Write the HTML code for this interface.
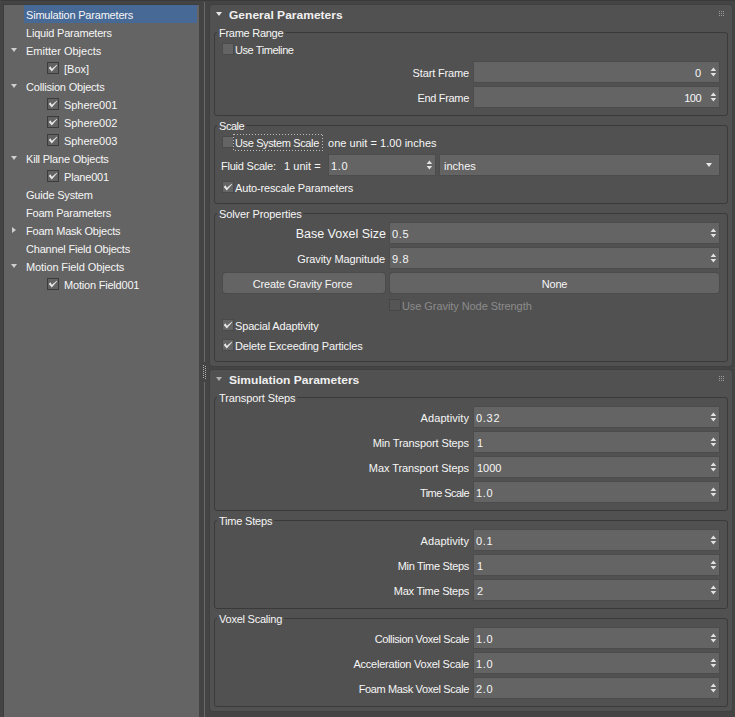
<!DOCTYPE html>
<html><head><meta charset="utf-8"><title>Fluid Simulation Parameters</title>
<style>
html,body{margin:0;padding:0}
body{width:735px;height:717px;overflow:hidden;background:#444444;position:relative;font-family:"Liberation Sans",sans-serif;font-size:11px;color:#f6f6f6}
div,span{position:absolute;box-sizing:border-box;white-space:nowrap}
.tree{left:3px;top:4px;width:196px;height:714px;background:#646464;border:1px solid #3d3d3d;border-right:none}
.row{left:0;height:18px;line-height:18px;width:195px}
.row .t{top:1px;letter-spacing:-0.2px}
.sel{left:20px;top:0;width:173px;height:18px;background:#476996}
.tri-d{width:0;height:0;border-left:3px solid transparent;border-right:3px solid transparent;border-top:4px solid #cfcfcf}
.tri-r{width:0;height:0;border-top:3px solid transparent;border-bottom:3px solid transparent;border-left:4px solid #cfcfcf}
.tcb{width:12px;height:12px;background:#626262;border:1px solid #3b3b3b}
.panel{left:210px;width:522px;background:#515151;border-radius:3px;box-shadow:0 0 0 1px #404040}
.hd{font-weight:bold;font-size:11px;left:19px;top:3px;line-height:14px;color:#f0f0f0;transform:scaleX(1.093);transform-origin:0 0}
.grp{left:4px;width:514px;border:1px solid #3a3a3a;border-radius:3px}
.gl{left:2px;top:-7px;height:14px;line-height:14px;padding:0 1.5px 0 2px;background:#515151;letter-spacing:-0.1px}
.lb{height:20px;line-height:20px;letter-spacing:-0.15px;margin-top:1px}
.rl{text-align:right;right:258px}
.fld{height:20px;background:#646464;line-height:20px;box-shadow:0 0 0 1px #4c4c4c}
.fld .v{left:3px;top:1px}
.fld .vr{right:18px;top:1px}
.sp{right:2px;top:5px}
.sp i,.sp b{position:absolute;left:0;width:0;height:0;border-left:2.5px solid transparent;border-right:2.5px solid transparent}
.sp i{top:0;border-bottom:3px solid #e0e0e0}
.sp b{top:5px;border-top:3px solid #e0e0e0}
.cb{width:12px;height:12px;background:#646464;border:1px solid #4a4a4a}
.cbd{width:12px;height:12px;background:#555555;border:1px solid #474747}
.btn{height:20px;line-height:22px;letter-spacing:-0.2px;background:#646464;border-radius:3px;text-align:center;box-shadow:0 0 0 1px #4b4b4b}
svg{position:absolute;overflow:visible}
</style></head><body>

<div style="left:1px;top:0;width:734px;height:1px;background:#3a3a3a"></div>
<div class="tree">
<div class="row" style="top:0px">
<div class="sel"></div>
<span class="t" style="left:22px">Simulation Parameters</span>
</div>
<div class="row" style="top:18px">
<span class="t" style="left:22px">Liquid Parameters</span>
</div>
<div class="row" style="top:36px">
<div class="tri-d" style="left:7px;top:7px"></div>
<span class="t" style="left:22px;letter-spacing:0">Emitter Objects</span>
</div>
<div class="row" style="top:54px">
<div class="tcb" style="left:43px;top:3px"><svg width="10" height="10" viewBox="0 0 10 10" style="left:0;top:0"><path d="M0.7 4.9 L2.4 3.3 L3.9 5.7 L8.8 1.8 L9.2 2.2 L3.8 8.5 Z" fill="#e6e6e6"/></svg></div>
<span class="t" style="left:60px;letter-spacing:0">[Box]</span>
</div>
<div class="row" style="top:72px">
<div class="tri-d" style="left:7px;top:7px"></div>
<span class="t" style="left:22px">Collision Objects</span>
</div>
<div class="row" style="top:90px">
<div class="tcb" style="left:43px;top:3px"><svg width="10" height="10" viewBox="0 0 10 10" style="left:0;top:0"><path d="M0.7 4.9 L2.4 3.3 L3.9 5.7 L8.8 1.8 L9.2 2.2 L3.8 8.5 Z" fill="#e6e6e6"/></svg></div>
<span class="t" style="left:60px;letter-spacing:-0.06px">Sphere001</span>
</div>
<div class="row" style="top:108px">
<div class="tcb" style="left:43px;top:3px"><svg width="10" height="10" viewBox="0 0 10 10" style="left:0;top:0"><path d="M0.7 4.9 L2.4 3.3 L3.9 5.7 L8.8 1.8 L9.2 2.2 L3.8 8.5 Z" fill="#e6e6e6"/></svg></div>
<span class="t" style="left:60px;letter-spacing:-0.06px">Sphere002</span>
</div>
<div class="row" style="top:126px">
<div class="tcb" style="left:43px;top:3px"><svg width="10" height="10" viewBox="0 0 10 10" style="left:0;top:0"><path d="M0.7 4.9 L2.4 3.3 L3.9 5.7 L8.8 1.8 L9.2 2.2 L3.8 8.5 Z" fill="#e6e6e6"/></svg></div>
<span class="t" style="left:60px;letter-spacing:-0.06px">Sphere003</span>
</div>
<div class="row" style="top:144px">
<div class="tri-d" style="left:7px;top:7px"></div>
<span class="t" style="left:22px">Kill Plane Objects</span>
</div>
<div class="row" style="top:162px">
<div class="tcb" style="left:43px;top:3px"><svg width="10" height="10" viewBox="0 0 10 10" style="left:0;top:0"><path d="M0.7 4.9 L2.4 3.3 L3.9 5.7 L8.8 1.8 L9.2 2.2 L3.8 8.5 Z" fill="#e6e6e6"/></svg></div>
<span class="t" style="left:60px">Plane001</span>
</div>
<div class="row" style="top:180px">
<span class="t" style="left:22px">Guide System</span>
</div>
<div class="row" style="top:198px">
<span class="t" style="left:22px">Foam Parameters</span>
</div>
<div class="row" style="top:216px">
<div class="tri-r" style="left:8px;top:6px"></div>
<span class="t" style="left:22px">Foam Mask Objects</span>
</div>
<div class="row" style="top:234px">
<span class="t" style="left:22px">Channel Field Objects</span>
</div>
<div class="row" style="top:252px">
<div class="tri-d" style="left:7px;top:7px"></div>
<span class="t" style="left:22px;letter-spacing:-0.1px">Motion Field Objects</span>
</div>
<div class="row" style="top:270px">
<div class="tcb" style="left:43px;top:3px"><svg width="10" height="10" viewBox="0 0 10 10" style="left:0;top:0"><path d="M0.7 4.9 L2.4 3.3 L3.9 5.7 L8.8 1.8 L9.2 2.2 L3.8 8.5 Z" fill="#e6e6e6"/></svg></div>
<span class="t" style="left:60px">Motion Field001</span>
</div>
</div>
<div style="left:204px;top:2px;width:1px;height:360px;background:#686868"></div>
<div style="left:204px;top:382px;width:1px;height:335px;background:#686868"></div>
<div style="left:203px;top:365px;width:1px;height:1px;background:#b0b0b0"></div>
<div style="left:205px;top:366px;width:1px;height:1px;background:#b0b0b0"></div>
<div style="left:203px;top:367px;width:1px;height:1px;background:#b0b0b0"></div>
<div style="left:205px;top:368px;width:1px;height:1px;background:#b0b0b0"></div>
<div style="left:203px;top:369px;width:1px;height:1px;background:#b0b0b0"></div>
<div style="left:205px;top:370px;width:1px;height:1px;background:#b0b0b0"></div>
<div style="left:203px;top:371px;width:1px;height:1px;background:#b0b0b0"></div>
<div style="left:205px;top:372px;width:1px;height:1px;background:#b0b0b0"></div>
<div style="left:203px;top:373px;width:1px;height:1px;background:#b0b0b0"></div>
<div style="left:205px;top:374px;width:1px;height:1px;background:#b0b0b0"></div>
<div style="left:203px;top:375px;width:1px;height:1px;background:#b0b0b0"></div>
<div style="left:205px;top:376px;width:1px;height:1px;background:#b0b0b0"></div>
<div style="left:203px;top:377px;width:1px;height:1px;background:#b0b0b0"></div>
<div style="left:205px;top:378px;width:1px;height:1px;background:#b0b0b0"></div>
<div class="panel" style="top:5px;height:361px">
<div class="tri-d" style="left:6px;top:7px;border-top-color:#e8e8e8"></div>
<span class="hd">General Parameters</span>
<div style="left:509px;top:6px;width:1px;height:1px;background:#9a9a9a"></div><div style="left:511px;top:6px;width:1px;height:1px;background:#9a9a9a"></div><div style="left:513px;top:6px;width:1px;height:1px;background:#9a9a9a"></div><div style="left:509px;top:8px;width:1px;height:1px;background:#9a9a9a"></div><div style="left:511px;top:8px;width:1px;height:1px;background:#9a9a9a"></div><div style="left:513px;top:8px;width:1px;height:1px;background:#9a9a9a"></div><div style="left:509px;top:10px;width:1px;height:1px;background:#9a9a9a"></div><div style="left:511px;top:10px;width:1px;height:1px;background:#9a9a9a"></div><div style="left:513px;top:10px;width:1px;height:1px;background:#9a9a9a"></div>
<div class="grp" style="top:27px;height:84px"><span class="gl" style="letter-spacing:-0.27px">Frame Range</span>
<div class="cb" style="left:7px;top:10px"></div><span class="lb" style="left:20px;top:6px"><span style="position:static;letter-spacing:-0.42px">Use Timeline</span></span>
<span class="lb rl" style="top:29px">Start Frame</span>
<div class="fld" style="left:259px;top:29px;width:245px"><span class="vr">0</span><svg class="sp" width="7" height="10" viewBox="0 0 7 10"><path d="M0.6 4.1 L3.4 0.6 L6.2 4.1 Z M0.6 6 L3.4 9.4 L6.2 6 Z" fill="#e2e2e2"/></svg></div>
<span class="lb rl" style="top:54px;letter-spacing:-0.31px">End Frame</span>
<div class="fld" style="left:259px;top:54px;width:245px"><span class="vr"><span style="position:static;letter-spacing:-0.5px">100</span></span><svg class="sp" width="7" height="10" viewBox="0 0 7 10"><path d="M0.6 4.1 L3.4 0.6 L6.2 4.1 Z M0.6 6 L3.4 9.4 L6.2 6 Z" fill="#e2e2e2"/></svg></div>
</div>
<div class="grp" style="top:120px;height:79px"><span class="gl" style="letter-spacing:-0.45px">Scale</span>
<div class="cb" style="left:7px;top:10px"></div><span class="lb" style="left:20px;top:6px"><span style="position:static;letter-spacing:-0.37px">Use System Scale</span></span>
<div style="left:18px;top:8px;width:90px;height:17px;background:linear-gradient(90deg,#bdbdbd 1px,transparent 1px) 1px 0/3px 1px repeat-x,linear-gradient(90deg,#bdbdbd 1px,transparent 1px) 2px 16px/3px 1px repeat-x,linear-gradient(180deg,#bdbdbd 1px,transparent 1px) 0 0/1px 3px repeat-y,linear-gradient(180deg,#bdbdbd 1px,transparent 1px) 89px 1px/1px 3px repeat-y"></div>
<span class="lb" style="left:113px;top:6px;letter-spacing:0.03px">one unit = 1.00 inches</span>
<span class="lb" style="left:6px;top:29px;letter-spacing:-0.22px">Fluid Scale:</span>
<span class="lb" style="left:69px;top:29px;letter-spacing:0.05px">1 unit =</span>
<div class="fld" style="left:114px;top:29px;width:106px"><span class="v"><span style="position:static;letter-spacing:0.7px;margin-left:-1px">1.0</span></span><svg class="sp" width="7" height="10" viewBox="0 0 7 10"><path d="M0.6 4.1 L3.4 0.6 L6.2 4.1 Z M0.6 6 L3.4 9.4 L6.2 6 Z" fill="#e2e2e2"/></svg></div>
<div class="fld" style="left:225px;top:29px;width:279px"><span class="v" style="left:4px">inches</span><div class="tri-d" style="right:7px;top:8px;border-top-color:#e8e8e8"></div></div>
<div class="cb" style="left:7px;top:55px"><svg width="10" height="10" viewBox="0 0 10 10" style="left:0;top:0"><path d="M0.7 4.9 L2.4 3.3 L3.9 5.7 L8.8 1.8 L9.2 2.2 L3.8 8.5 Z" fill="#e6e6e6"/></svg></div><span class="lb" style="left:20px;top:51px">Auto-rescale Parameters</span>
</div>
<div class="grp" style="top:208px;height:149px"><span class="gl">Solver Properties</span>
<span class="lb" style="right:341px;top:9px;font-size:12.5px;letter-spacing:0">Base Voxel Size</span>
<div class="fld" style="left:175px;top:9px;width:329px"><span class="v"><span style="position:static;letter-spacing:0.7px;margin-left:-1px">0.5</span></span><svg class="sp" width="7" height="10" viewBox="0 0 7 10"><path d="M0.6 4.1 L3.4 0.6 L6.2 4.1 Z M0.6 6 L3.4 9.4 L6.2 6 Z" fill="#e2e2e2"/></svg></div>
<span class="lb" style="right:342px;top:34px;letter-spacing:-0.09px">Gravity Magnitude</span>
<div class="fld" style="left:175px;top:34px;width:329px"><span class="v"><span style="position:static;letter-spacing:0.7px;margin-left:-1px">9.8</span></span><svg class="sp" width="7" height="10" viewBox="0 0 7 10"><path d="M0.6 4.1 L3.4 0.6 L6.2 4.1 Z M0.6 6 L3.4 9.4 L6.2 6 Z" fill="#e2e2e2"/></svg></div>
<div class="btn" style="left:8px;top:59px;width:162px;padding-right:3px;letter-spacing:-0.12px">Create Gravity Force</div>
<div class="btn" style="left:175px;top:59px;width:329px">None</div>
<div class="cbd" style="left:174px;top:85px"></div><span class="lb" style="color:#8c8c8c;left:187px;top:81px"><span style="position:static;letter-spacing:-0.07px">Use Gravity Node Strength</span></span>
<div class="cb" style="left:7px;top:105px"><svg width="10" height="10" viewBox="0 0 10 10" style="left:0;top:0"><path d="M0.7 4.9 L2.4 3.3 L3.9 5.7 L8.8 1.8 L9.2 2.2 L3.8 8.5 Z" fill="#e6e6e6"/></svg></div><span class="lb" style="left:20px;top:101px">Spacial Adaptivity</span>
<div class="cb" style="left:7px;top:125px"><svg width="10" height="10" viewBox="0 0 10 10" style="left:0;top:0"><path d="M0.7 4.9 L2.4 3.3 L3.9 5.7 L8.8 1.8 L9.2 2.2 L3.8 8.5 Z" fill="#e6e6e6"/></svg></div><span class="lb" style="left:20px;top:121px">Delete Exceeding Particles</span>
</div>
</div>
<div class="panel" style="top:370px;height:341px">
<div class="tri-d" style="left:6px;top:7px;border-top-color:#b0b0b0"></div>
<span class="hd">Simulation Parameters</span>
<div style="left:509px;top:6px;width:1px;height:1px;background:#9a9a9a"></div><div style="left:511px;top:6px;width:1px;height:1px;background:#9a9a9a"></div><div style="left:513px;top:6px;width:1px;height:1px;background:#9a9a9a"></div><div style="left:509px;top:8px;width:1px;height:1px;background:#9a9a9a"></div><div style="left:511px;top:8px;width:1px;height:1px;background:#9a9a9a"></div><div style="left:513px;top:8px;width:1px;height:1px;background:#9a9a9a"></div><div style="left:509px;top:10px;width:1px;height:1px;background:#9a9a9a"></div><div style="left:511px;top:10px;width:1px;height:1px;background:#9a9a9a"></div><div style="left:513px;top:10px;width:1px;height:1px;background:#9a9a9a"></div>
<div class="grp" style="top:27px;height:114px"><span class="gl" style="letter-spacing:-0.1px">Transport Steps</span><span class="lb rl" style="top:9px;letter-spacing:0.07px">Adaptivity</span><div class="fld" style="left:259px;top:9px;width:245px"><span class="v"><span style="position:static;letter-spacing:0.7px;margin-left:-1px">0.32</span></span><svg class="sp" width="7" height="10" viewBox="0 0 7 10"><path d="M0.6 4.1 L3.4 0.6 L6.2 4.1 Z M0.6 6 L3.4 9.4 L6.2 6 Z" fill="#e2e2e2"/></svg></div><span class="lb rl" style="top:34px;letter-spacing:-0.11px">Min Transport Steps</span><div class="fld" style="left:259px;top:34px;width:245px"><span class="v">1</span><svg class="sp" width="7" height="10" viewBox="0 0 7 10"><path d="M0.6 4.1 L3.4 0.6 L6.2 4.1 Z M0.6 6 L3.4 9.4 L6.2 6 Z" fill="#e2e2e2"/></svg></div><span class="lb rl" style="top:59px;letter-spacing:-0.07px">Max Transport Steps</span><div class="fld" style="left:259px;top:59px;width:245px"><span class="v">1000</span><svg class="sp" width="7" height="10" viewBox="0 0 7 10"><path d="M0.6 4.1 L3.4 0.6 L6.2 4.1 Z M0.6 6 L3.4 9.4 L6.2 6 Z" fill="#e2e2e2"/></svg></div><span class="lb rl" style="top:84px;letter-spacing:-0.55px">Time Scale</span><div class="fld" style="left:259px;top:84px;width:245px"><span class="v"><span style="position:static;letter-spacing:0.7px;margin-left:-1px">1.0</span></span><svg class="sp" width="7" height="10" viewBox="0 0 7 10"><path d="M0.6 4.1 L3.4 0.6 L6.2 4.1 Z M0.6 6 L3.4 9.4 L6.2 6 Z" fill="#e2e2e2"/></svg></div></div>
<div class="grp" style="top:150px;height:89px"><span class="gl" style="letter-spacing:-0.2px">Time Steps</span><span class="lb rl" style="top:9px;letter-spacing:0.07px">Adaptivity</span><div class="fld" style="left:259px;top:9px;width:245px"><span class="v"><span style="position:static;letter-spacing:0.7px;margin-left:-1px">0.1</span></span><svg class="sp" width="7" height="10" viewBox="0 0 7 10"><path d="M0.6 4.1 L3.4 0.6 L6.2 4.1 Z M0.6 6 L3.4 9.4 L6.2 6 Z" fill="#e2e2e2"/></svg></div><span class="lb rl" style="top:34px;letter-spacing:-0.32px">Min Time Steps</span><div class="fld" style="left:259px;top:34px;width:245px"><span class="v">1</span><svg class="sp" width="7" height="10" viewBox="0 0 7 10"><path d="M0.6 4.1 L3.4 0.6 L6.2 4.1 Z M0.6 6 L3.4 9.4 L6.2 6 Z" fill="#e2e2e2"/></svg></div><span class="lb rl" style="top:59px;letter-spacing:-0.26px">Max Time Steps</span><div class="fld" style="left:259px;top:59px;width:245px"><span class="v">2</span><svg class="sp" width="7" height="10" viewBox="0 0 7 10"><path d="M0.6 4.1 L3.4 0.6 L6.2 4.1 Z M0.6 6 L3.4 9.4 L6.2 6 Z" fill="#e2e2e2"/></svg></div></div>
<div class="grp" style="top:248px;height:89px"><span class="gl" style="letter-spacing:-0.23px">Voxel Scaling</span><span class="lb rl" style="top:9px;letter-spacing:-0.37px">Collision Voxel Scale</span><div class="fld" style="left:259px;top:9px;width:245px"><span class="v"><span style="position:static;letter-spacing:0.7px;margin-left:-1px">1.0</span></span><svg class="sp" width="7" height="10" viewBox="0 0 7 10"><path d="M0.6 4.1 L3.4 0.6 L6.2 4.1 Z M0.6 6 L3.4 9.4 L6.2 6 Z" fill="#e2e2e2"/></svg></div><span class="lb rl" style="top:34px;letter-spacing:-0.23px">Acceleration Voxel Scale</span><div class="fld" style="left:259px;top:34px;width:245px"><span class="v"><span style="position:static;letter-spacing:0.7px;margin-left:-1px">1.0</span></span><svg class="sp" width="7" height="10" viewBox="0 0 7 10"><path d="M0.6 4.1 L3.4 0.6 L6.2 4.1 Z M0.6 6 L3.4 9.4 L6.2 6 Z" fill="#e2e2e2"/></svg></div><span class="lb rl" style="top:59px;letter-spacing:-0.365px">Foam Mask Voxel Scale</span><div class="fld" style="left:259px;top:59px;width:245px"><span class="v"><span style="position:static;letter-spacing:0.7px;margin-left:-1px">2.0</span></span><svg class="sp" width="7" height="10" viewBox="0 0 7 10"><path d="M0.6 4.1 L3.4 0.6 L6.2 4.1 Z M0.6 6 L3.4 9.4 L6.2 6 Z" fill="#e2e2e2"/></svg></div></div>
</div>
</body></html>
